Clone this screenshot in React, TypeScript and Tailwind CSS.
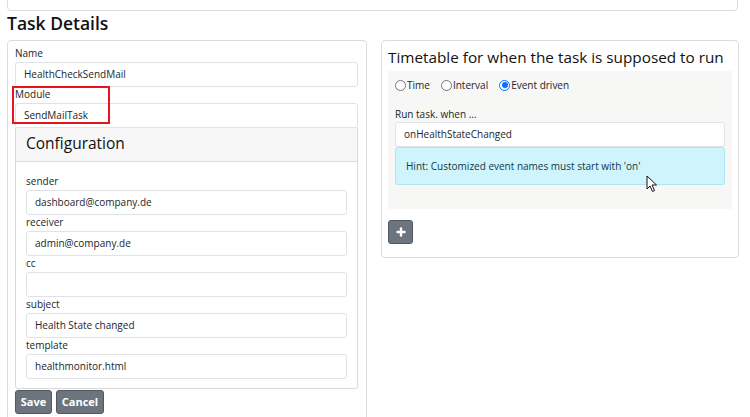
import React from "react";

const font = { fontFamily: '"Open Sans", "Noto Sans", sans-serif' };

function Field({ label, value }: { label: string; value: string }) {
  return (
    <div className="flex flex-col">
      <div className="h-[16px] text-[10px] leading-[15px] text-[#212529]">{label}</div>
      <div className="h-[25px] border border-[#dfe3e7] rounded-[3px] bg-white pl-[8px] flex items-center text-[10px] text-[#212529]">
        {value}
      </div>
    </div>
  );
}

function Radio({ label, checked }: { label: string; checked?: boolean }) {
  return (
    <div className="flex items-center gap-[1px] text-[10px] text-[#212529]">
      {checked ? (
        <span className="w-[11px] h-[11px] rounded-full border border-[#0d6efd] bg-white flex items-center justify-center">
          <span className="w-[6px] h-[6px] rounded-full bg-[#0d6efd]" />
        </span>
      ) : (
        <span className="w-[11px] h-[11px] rounded-full border border-[#767676] bg-white" />
      )}
      <span>{label}</span>
    </div>
  );
}

function Btn({ children, w }: { children: React.ReactNode; w: string }) {
  return (
    <div
      className={`${w} h-[24px] bg-[#6c757d] border border-[#50575e] rounded-[3px] text-white text-[11px] font-bold flex items-center justify-center`}
    >
      {children}
    </div>
  );
}

export default function App() {
  return (
    <div className="relative w-[750px] h-[417px] overflow-hidden bg-white" style={font}>
      <div className="ml-[7px] mt-[-6px] w-[731px] h-[17px] border border-[#dcdcdc] rounded-[4px]" />
      <div className="ml-[7px] mt-[1px] h-[22px] text-[17.5px] leading-[22px] font-semibold text-[#111]">Task Details</div>
      <div className="flex items-start mt-[6px] ml-[7px] gap-[14px]">
        {/* left panel */}
        <div className="w-[360px] h-[400px] border border-[#dcdcdc] rounded-[4px] pl-[7px] pr-[8px] pt-[5px]">
          <Field label="Name" value="HealthCheckSendMail" />
          <Field label="Module" value="SendMailTask" />
          <div className="mt-[-2px] border border-[#d9d9d9] rounded-[3px] bg-white">
            <div className="h-[35px] bg-[#f7f7f7] border-b border-[#dcdcdc] pl-[10px] flex items-center text-[15.5px] font-medium text-[#111]">
              Configuration
            </div>
            <div className="pt-[12px] pb-[9px] px-[10px]">
              <Field label="sender" value="dashboard@company.de" />
              <Field label="receiver" value="admin@company.de" />
              <Field label="cc" value="" />
              <Field label="subject" value="Health State changed" />
              <Field label="template" value="healthmonitor.html" />
            </div>
          </div>
          <div className="flex gap-[4px] mt-[1px]">
            <Btn w="w-[37px]">Save</Btn>
            <Btn w="w-[48px]">Cancel</Btn>
          </div>
        </div>
        {/* right panel */}
        <div className="w-[358px] border border-[#dcdcdc] rounded-[4px] px-[6px] pt-[5px] pb-[13px]">
          <div className="h-[22px] leading-[22px] text-[15.3px] font-medium text-[#111]">
            Timetable for when the task is supposed to run
          </div>
          <div className="mt-[3px] bg-[#f7f7f6] px-[7px] pt-[7px] pb-[24px]">
            <div className="flex items-center gap-[11px] h-[14px]">
              <Radio label="Time" />
              <Radio label="Interval" />
              <Radio label="Event driven" checked />
            </div>
            <div className="mt-[14px] h-[16px] text-[10px] leading-[16px] text-[#212529]">Run task. when ...</div>
            <div className="h-[25px] border border-[#dfe3e7] rounded-[3px] bg-white pl-[8px] flex items-center text-[10px] text-[#212529]">
              onHealthStateChanged
            </div>
            <div className="h-[38px] bg-[#cff4fc] border border-[#a8e6f7] rounded-[3px] pl-[10px] flex items-center text-[10px] text-[#0b3a4a]">
              Hint: Customized event names must start with 'on'
            </div>
          </div>
          <div className="mt-[11px] w-[25px] h-[24px] bg-[#6c757d] border border-[#50575e] rounded-[3px] flex items-center justify-center">
            <svg width="10" height="10" viewBox="0 0 10 10">
              <path d="M5 1.5v7M1.5 5h7" stroke="white" strokeWidth="2.4" strokeLinecap="round" />
            </svg>
          </div>
        </div>
      </div>
      {/* red highlight box */}
      <div className="absolute left-[12px] top-[86px] w-[98px] h-[38px] border-2 border-[#e8141b]" />
      {/* mouse cursor */}
      <svg className="absolute left-[646px] top-[175px]" width="12" height="18" viewBox="0 0 12 18">
        <path d="M1 1 L1 14 L4 11 L6.5 16.5 L8.5 15.5 L6 10 L10.5 10 Z" fill="white" stroke="#111" strokeWidth="1" strokeLinejoin="round" />
      </svg>
    </div>
  );
}
